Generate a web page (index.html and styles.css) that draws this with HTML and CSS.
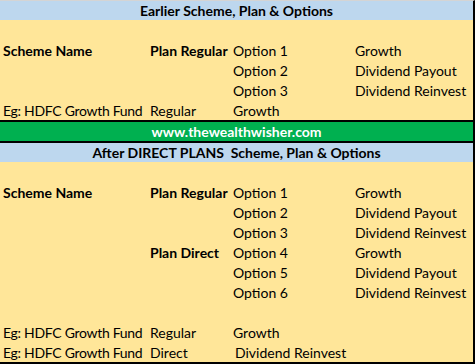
FILE: index.html
```html
<!DOCTYPE html>
<html>
<head>
<meta charset="utf-8">
<link rel="stylesheet" href="styles.css">
</head>
<body>
<div class="sheet">
  <div class="band blue">Earlier Scheme, Plan &amp; Options</div>
  <div class="grid">
    <div class="c"></div><div class="c"></div><div class="c"></div><div class="c"></div>
    <div class="c b">Scheme Name</div><div class="c b">Plan Regular</div><div class="c">Option 1</div><div class="c">Growth</div>
    <div class="c"></div><div class="c"></div><div class="c">Option 2</div><div class="c">Dividend Payout</div>
    <div class="c"></div><div class="c"></div><div class="c">Option 3</div><div class="c">Dividend Reinvest</div>
    <div class="c eg">Eg: HDFC Growth Fund</div><div class="c">Regular</div><div class="c">Growth</div><div class="c"></div>
  </div>
  <div class="band green">www.thewealthwisher.com</div>
  <div class="band blue">After DIRECT PLANS&nbsp; Scheme, Plan &amp; Options</div>
  <div class="grid">
    <div class="c"></div><div class="c"></div><div class="c"></div><div class="c"></div>
    <div class="c b">Scheme Name</div><div class="c b">Plan Regular</div><div class="c">Option 1</div><div class="c">Growth</div>
    <div class="c"></div><div class="c"></div><div class="c">Option 2</div><div class="c">Dividend Payout</div>
    <div class="c"></div><div class="c"></div><div class="c">Option 3</div><div class="c">Dividend Reinvest</div>
    <div class="c"></div><div class="c b">Plan Direct</div><div class="c">Option 4</div><div class="c">Growth</div>
    <div class="c"></div><div class="c"></div><div class="c">Option 5</div><div class="c">Dividend Payout</div>
    <div class="c"></div><div class="c"></div><div class="c">Option 6</div><div class="c">Dividend Reinvest</div>
    <div class="c"></div><div class="c"></div><div class="c"></div><div class="c"></div>
    <div class="c eg">Eg: HDFC Growth Fund</div><div class="c">Regular</div><div class="c">Growth</div><div class="c"></div>
    <div class="c eg">Eg: HDFC Growth Fund</div><div class="c">Direct</div><div class="c span">Dividend Reinvest</div>
  </div>
</div>
</body>
</html>
```
FILE: styles.css
```css
html, body {
  margin: 0;
  padding: 0;
  background: #ffffff;
}
.sheet {
  width: 473px;
  height: 361px;
  border-top: 1px solid #d4d4d4;
  border-right: 2px solid #000;
  border-bottom: 2px solid #000;
  background: #ffe699;
  font-family: Lato, "Liberation Sans", sans-serif;
  font-size: 14px;
  color: #000;
  display: flex;
  flex-direction: column;
}
.band {
  height: 19px;
  line-height: 20px;
  text-align: center;
  font-weight: bold;
  white-space: pre;
}
.blue {
  background: #bdd7ee;
}
.green {
  background: #00b050;
  color: #ffffff;
  border-top: 2px solid #000;
  border-bottom: 2px solid #000;
}
.grid {
  display: grid;
  grid-template-columns: 147px 83px 122px 121px;
  grid-auto-rows: 20px;
}
.c {
  padding-left: 3px;
  line-height: 22px;
  white-space: nowrap;
}
.b {
  font-weight: bold;
}
.eg {
  letter-spacing: -0.3px;
}
.span {
  grid-column: span 2;
  padding-left: 5px;
}
```
